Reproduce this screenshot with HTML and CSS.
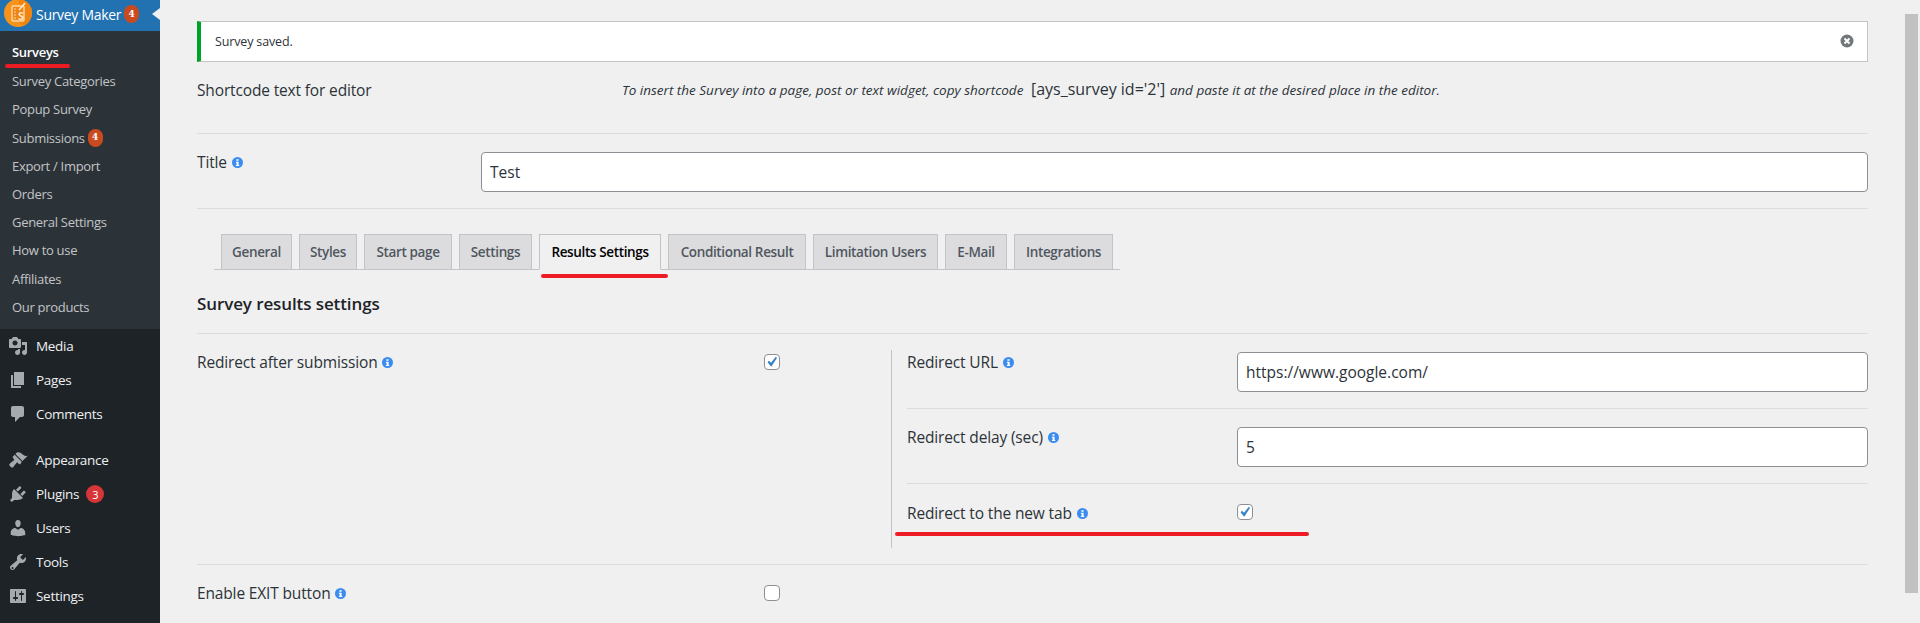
FILE: index.html
```html
<!DOCTYPE html>
<html lang="en">
<head>
<meta charset="utf-8">
<title>Survey Maker</title>
<link rel="stylesheet" href="styles.css">
</head>
<body>
<aside class="sidebar">
  <a class="menu-head">
    <svg class="logo" viewBox="0 0 28 28"><circle cx="14" cy="14" r="14" fill="#f7931a"/><path d="M14 0a14 14 0 0 1 14 14 14 14 0 0 1-9 13L8 16 7 7h9z" fill="#ef8410"/><rect x="8" y="7" width="12" height="15" rx="1" fill="none" stroke="#fbd9a8" stroke-width="1.4"/><path d="M10 10h2M10 13h2M10 16h2M10 19h2" stroke="#fbd9a8"/><path d="M15 11l6-7" stroke="#fde6c4" stroke-width="1.6"/><text class="logo-s" x="14" y="21">S</text></svg>
    <span class="head-label">Survey Maker</span>
    <span class="count count-orange">4</span>
    <span class="head-arrow"></span>
  </a>
  <ul class="submenu">
    <li class="active">Surveys</li>
    <li>Survey Categories</li>
    <li>Popup Survey</li>
    <li>Submissions <span class="count count-orange">4</span></li>
    <li>Export / Import</li>
    <li>Orders</li>
    <li>General Settings</li>
    <li>How to use</li>
    <li>Affiliates</li>
    <li>Our products</li>
  </ul>
  <ul class="menu">
    <li><svg viewBox="0 0 20 20"><path d="M13 11V4c0-.55-.45-1-1-1h-1.670L9 1H5L3.670 3H2c-.55 0-1 .45-1 1v7c0 .55.45 1 1 1h10c.55 0 1-.45 1-1zM7 4.500c1.380 0 2.500 1.120 2.500 2.500S8.380 9.500 7 9.500 4.500 8.380 4.500 7 5.620 4.500 7 4.500zM14 6h5v10.500c0 1.380-1.120 2.500-2.500 2.500S14 17.880 14 16.500s1.120-2.500 2.500-2.500c.17 0 .34.020.5.050V9h-3V6zm-4 8.050V13h2v3.500c0 1.380-1.120 2.500-2.500 2.500S7 17.880 7 16.500 8.120 14 9.500 14c.17 0 .34.020.5.050z"/></svg>Media</li>
    <li><svg viewBox="0 0 20 20"><path d="M6 15V2h10v13H6zm-1 1h8v2H3V5h2v11z"/></svg>Pages</li>
    <li><svg viewBox="0 0 20 20"><path d="M5 2h9c1.100 0 2 .9 2 2v7c0 1.100-.9 2-2 2h-2l-5 5v-5H5c-1.100 0-2-.9-2-2V4c0-1.100.9-2 2-2z"/></svg>Comments</li>
    <li class="menu-gap"><svg viewBox="0 0 20 20"><path d="M14.480 11.060L7.410 3.990l1.500-1.500c.5-.56 2.300-.47 3.510.32 1.210.8 1.430 1.280 2.910 2.100 1.180.64 2.450 1.260 4.450.85zm-.71.71L6.700 4.700 4.930 6.470c-.39.39-.39 1.020 0 1.410l1.060 1.060c.39.39.39 1.030 0 1.420-.6.600-1.430 1.150-2.210 1.700-.75.530-1.470 1.050-2.050 1.620-.58.570-.58 1.500 0 2.080l1.380 1.380c.57.570 1.500.57 2.070 0 .58-.58 1.100-1.300 1.630-2.050.55-.78 1.100-1.610 1.700-2.210.39-.39 1.020-.39 1.410 0l1.060 1.060c.39.39 1.020.39 1.410 0z"/></svg>Appearance</li>
    <li><svg viewBox="0 0 20 20"><path d="M13.110 4.360L9.870 7.600 8 5.730l3.240-3.240c.35-.34 1.050-.2 1.560.32.520.51.660 1.210.31 1.550zm-8 1.770l.91-1.120 9.010 9.010-1.190.84c-.71.710-2.630 1.160-3.820 1.160H6.140L4.900 17.260c-.59.590-1.540.59-2.120 0-.59-.58-.59-1.530 0-2.120l1.240-1.240v-3.880c0-1.130.4-3.190 1.090-3.890zm7.260 3.970l3.240-3.240c.34-.35 1.040-.21 1.550.31.520.51.660 1.210.31 1.550l-3.240 3.250z"/></svg>Plugins <span class="count count-red">3</span></li>
    <li><svg viewBox="0 0 20 20"><path d="M10 9.250c-2.270 0-2.730-3.440-2.730-3.440C7 4.020 7.820 2 9.970 2c2.160 0 2.980 2.020 2.710 3.810 0 0-.41 3.440-2.680 3.440zm0 2.570L12.720 10c2.390 0 4.520 2.330 4.520 4.530v2.490s-3.650 1.130-7.240 1.130c-3.650 0-7.240-1.130-7.240-1.130v-2.490c0-2.250 1.940-4.480 4.470-4.480z"/></svg>Users</li>
    <li><svg viewBox="0 0 20 20"><path d="M16.680 9.770c-1.340 1.340-3.300 1.670-4.950.99l-5.410 6.520c-.99.990-2.590.990-3.580 0s-.99-2.590 0-3.570l6.520-5.420c-.68-1.650-.35-3.610.99-4.950 1.280-1.280 3.120-1.620 4.720-1.060l-2.890 2.890 2.820 2.820 2.860-2.870c.53 1.580.18 3.400-1.080 4.670zM3.810 16.740c.4.400 1.050.400 1.450 0 .4-.4.4-1.050 0-1.450-.4-.4-1.050-.4-1.450 0-.4.4-.4 1.050 0 1.450z"/></svg>Tools</li>
    <li><svg viewBox="0 0 20 20"><path d="M18 16V4c0-.55-.45-1-1-1H3c-.55 0-1 .45-1 1v12c0 .55.45 1 1 1h14c.55 0 1-.45 1-1zM8 11h1c.55 0 1 .45 1 1s-.45 1-1 1H8v1.500c0 .28-.22.5-.5.5s-.5-.22-.5-.5V13H6c-.55 0-1-.45-1-1s.45-1 1-1h1V5.500c0-.28.22-.5.5-.5s.5.22.5.5V11zm5-2h-1c-.55 0-1-.45-1-1s.45-1 1-1h1V5.500c0-.28.22-.5.5-.5s.5.22.5.5V7h1c.55 0 1 .45 1 1s-.45 1-1 1h-1v5.500c0 .28-.22.5-.5.5s-.5-.22-.5-.5V9z"/></svg>Settings</li>
  </ul>
  <span class="mark mark-surveys"></span>
</aside>

<main class="content">
  <div class="notice">
    <span>Survey saved.</span>
    <svg class="dismiss" viewBox="0 0 14 14"><circle cx="7" cy="7" r="6.500" fill="#72777c"/><path d="M4.500 4.500l5 5M9.500 4.500l-5 5" stroke="#fff" stroke-width="2"/></svg>
  </div>

  <div class="shortcode-row">
    <div class="label-wide">Shortcode text for editor</div>
    <p class="shortcode-text"><i>To insert the Survey into a page, post or text widget, copy shortcode</i> <b>[ays_survey id='2']</b> <i>and paste it at the desired place in the editor.</i></p>
  </div>

  <div class="title-row">
    <label class="label title-label">Title <svg class="info" viewBox="0 0 10 10"><circle cx="5" cy="5" r="5"/><path d="M4 2h2v1.500H4zM3.500 4.300H6v2.900h.6v1H3.500v-1h.7V5.300h-.7z" fill="#fff"/></svg></label>
    <input class="field" type="text" value="Test">
  </div>

  <nav class="tabs">
    <a class="tab">General</a>
    <a class="tab">Styles</a>
    <a class="tab">Start page</a>
    <a class="tab">Settings</a>
    <a class="tab tab-active">Results Settings<span class="mark mark-tab"></span></a>
    <a class="tab">Conditional Result</a>
    <a class="tab">Limitation Users</a>
    <a class="tab">E-Mail</a>
    <a class="tab">Integrations</a>
  </nav>

  <h2 class="section-title">Survey results settings</h2>

  <section class="redirect-row">
    <label class="label left-label">Redirect after submission <svg class="info" viewBox="0 0 10 10"><circle cx="5" cy="5" r="5"/><path d="M4 2h2v1.500H4zM3.500 4.300H6v2.900h.6v1H3.500v-1h.7V5.300h-.7z" fill="#fff"/></svg></label>
    <div class="check-col"><span class="check"><svg viewBox="0 0 14 14"><path d="M2.500 7.200l1.500-1.500 2 2.100L10.800 1.800l1.200 1.100L6.200 11.800z"/></svg></span></div>
    <div class="sub-panel">
      <div class="sub-row">
        <label class="label sub-label">Redirect URL <svg class="info" viewBox="0 0 10 10"><circle cx="5" cy="5" r="5"/><path d="M4 2h2v1.500H4zM3.500 4.300H6v2.900h.6v1H3.500v-1h.7V5.300h-.7z" fill="#fff"/></svg></label>
        <input class="field" type="text" value="https://www.google.com/">
      </div>
      <div class="sub-row">
        <label class="label sub-label">Redirect delay (sec) <svg class="info" viewBox="0 0 10 10"><circle cx="5" cy="5" r="5"/><path d="M4 2h2v1.500H4zM3.500 4.300H6v2.900h.6v1H3.500v-1h.7V5.300h-.7z" fill="#fff"/></svg></label>
        <input class="field" type="text" value="5">
      </div>
      <div class="sub-row sub-row-check">
        <label class="label sub-label">Redirect to the new tab <svg class="info" viewBox="0 0 10 10"><circle cx="5" cy="5" r="5"/><path d="M4 2h2v1.500H4zM3.500 4.300H6v2.900h.6v1H3.500v-1h.7V5.300h-.7z" fill="#fff"/></svg></label>
        <span class="check"><svg viewBox="0 0 14 14"><path d="M2.500 7.200l1.500-1.500 2 2.100L10.800 1.800l1.200 1.100L6.200 11.800z"/></svg></span>
        <span class="mark mark-tab-new"></span>
      </div>
    </div>
  </section>

  <section class="exit-row">
    <label class="label left-label">Enable EXIT button <svg class="info" viewBox="0 0 10 10"><circle cx="5" cy="5" r="5"/><path d="M4 2h2v1.500H4zM3.500 4.300H6v2.900h.6v1H3.500v-1h.7V5.300h-.7z" fill="#fff"/></svg></label>
    <div class="check-col"><span class="check"></span></div>
  </section>
</main>
<div class="scroll-thumb"></div>
</body>
</html>
```

FILE: styles.css
```css
* { box-sizing: border-box; }
html, body { height: 100%; margin: 0; overflow: hidden; }
body {
  display: flex;
  background: #f0f0f1;
  color: #2c3338;
  font-family: "Open Sans", "Noto Sans", sans-serif;
  font-size: 15.500px;
  letter-spacing: -0.15px;
}
ul { list-style: none; margin: 0; padding: 0; }

/* sidebar */
.sidebar { position: relative; flex: 0 0 160px; height: 623px; background: #1d2327; font-size: 13px; letter-spacing: -0.3px; }
.menu-head { position: relative; display: flex; align-items: center; height: 31px; padding-bottom: 3px; background: #2271b1; color: #fff; }
.logo { flex: none; width: 28px; height: 28px; margin: -2px 0 0 4px; }
.logo-s { font: 700 11px "Open Sans", sans-serif; fill: #fde6c4; }
.head-label { margin-left: 4px; font-size: 14px; }
.head-arrow { position: absolute; right: 0; top: 8px; border: 6px solid transparent; border-left: 0; border-right: 8px solid #f0f0f1; }
.count {
  display: inline-flex; align-items: center; justify-content: center;
  height: 18px; min-width: 15px; padding: 0 4px; margin-left: 3px;
  border-radius: 9px; color: #fff; font: 700 9px/1 "DejaVu Serif", serif; letter-spacing: 0;
}
.count-orange { background: #ca4a1f; }
.count-red { min-width: 18px; background: #d63638; font: 400 11px/1 "Open Sans", sans-serif; }
.submenu { height: 298px; padding-top: 8px; background: #2c3338; }
.submenu li { display: flex; align-items: center; height: 28.200px; padding-left: 12px; color: #c3c4c7; }
.submenu li.active { padding-bottom: 2px; color: #fff; font-weight: 600; }
.menu li { display: flex; align-items: center; height: 34px; color: #f0f0f1; font-size: 13.500px; white-space: pre; }
.menu svg { flex: none; width: 20px; height: 20px; margin: 0 8px; fill: #a7aaad; }
.menu .menu-gap { margin-top: 12px; }
.menu .count { margin-left: 4px; }

/* red annotation strokes */
.mark { position: absolute; display: block; height: 4px; border-radius: 2px; background: #ed1c24; }
.mark-surveys { left: 5px; top: 64px; width: 65px; }
.mark-tab { left: 1px; top: 39px; width: 127px; }
.mark-tab-new { left: -12px; top: 48px; width: 414px; }

/* content */
.content { flex: 1; min-width: 0; padding: 21px 52px 0 37px; }
.notice { display: flex; align-items: center; justify-content: space-between; height: 41px; padding: 0 13px 0 14px; background: #fff; border: 1px solid #c3c4c7; border-left: 4px solid #00a32a; font-size: 12.500px; }
.dismiss { width: 14px; height: 14px; margin-top: -1px; }
.shortcode-row { display: flex; height: 72px; padding-top: 16px; border-bottom: 1px solid #dcdcde; }
.label-wide { flex: 0 0 425px; line-height: 24px; }
.shortcode-text { margin: 0; font-size: 13.500px; line-height: 22px; white-space: nowrap; letter-spacing: 0; }
.shortcode-text b { margin: 0 1px 0 4px; font-weight: 500; font-size: 16px; }
.label { color: #2c3338; line-height: 20px; }
.info { width: 11px; height: 11px; margin-left: 1px; fill: #3b8cf0; }
.title-row { display: flex; height: 75px; padding-top: 18px; border-bottom: 1px solid #dcdcde; }
.title-label { flex: 0 0 284px; }
.field { flex: 1; min-width: 0; height: 40px; padding: 0 8px; background: #fff; border: 1px solid #8c8f94; border-radius: 4px; color: #2c3338; font: inherit; letter-spacing: 0; }

.tabs { display: grid; grid-template-columns: 71px 58px 88px 73px 122px 138px 125px 62px 99px; gap: 7px; width: 906px; height: 36px; margin: 25px 0 0 17px; padding-left: 7px; border-bottom: 1px solid #c3c4c7; }
.tab { position: relative; height: 36px; background: #dcdcde; border: 1px solid #c3c4c7; color: #50575e; font-size: 13.500px; font-weight: 600; letter-spacing: -0.36px; line-height: 34px; text-align: center; white-space: nowrap; }
.tab-active { background: #f0f0f1; border-bottom-color: #f0f0f1; color: #000; }

.section-title { height: 64px; margin: 0; padding-top: 22px; border-bottom: 1px solid #dcdcde; color: #1d2327; font-size: 17px; font-weight: 600; letter-spacing: -0.1px; line-height: 24px; }

.redirect-row { display: flex; height: 231px; padding-top: 16px; border-bottom: 1px solid #dcdcde; }
.left-label { flex: 0 0 567px; padding-top: 2px; }
.check-col { flex: 0 0 127px; padding-top: 4px; }
.check { display: flex; flex: none; align-items: center; justify-content: center; width: 16px; height: 16px; background: #fff; border: 1px solid #8c8f94; border-radius: 4px; }
.check svg { width: 14px; height: 14px; fill: #3582c4; }
.sub-panel { flex: 1; height: 198px; padding: 2px 0 0 15px; border-left: 1px solid #c3c4c7; }
.sub-row { position: relative; display: flex; padding-bottom: 16px; border-bottom: 1px solid #dcdcde; }
.sub-row + .sub-row { padding-top: 18px; }
.sub-row.sub-row-check { align-items: flex-start; padding-top: 19px; padding-bottom: 0; border-bottom: 0; }
.sub-label { flex: 0 0 330px; }
.sub-row-check .check { margin-top: 1px; }
.exit-row { display: flex; padding-top: 16px; }

.scroll-thumb { position: absolute; left: 1905px; top: 14px; width: 13px; height: 579px; background: #c1c1c1; }
```
